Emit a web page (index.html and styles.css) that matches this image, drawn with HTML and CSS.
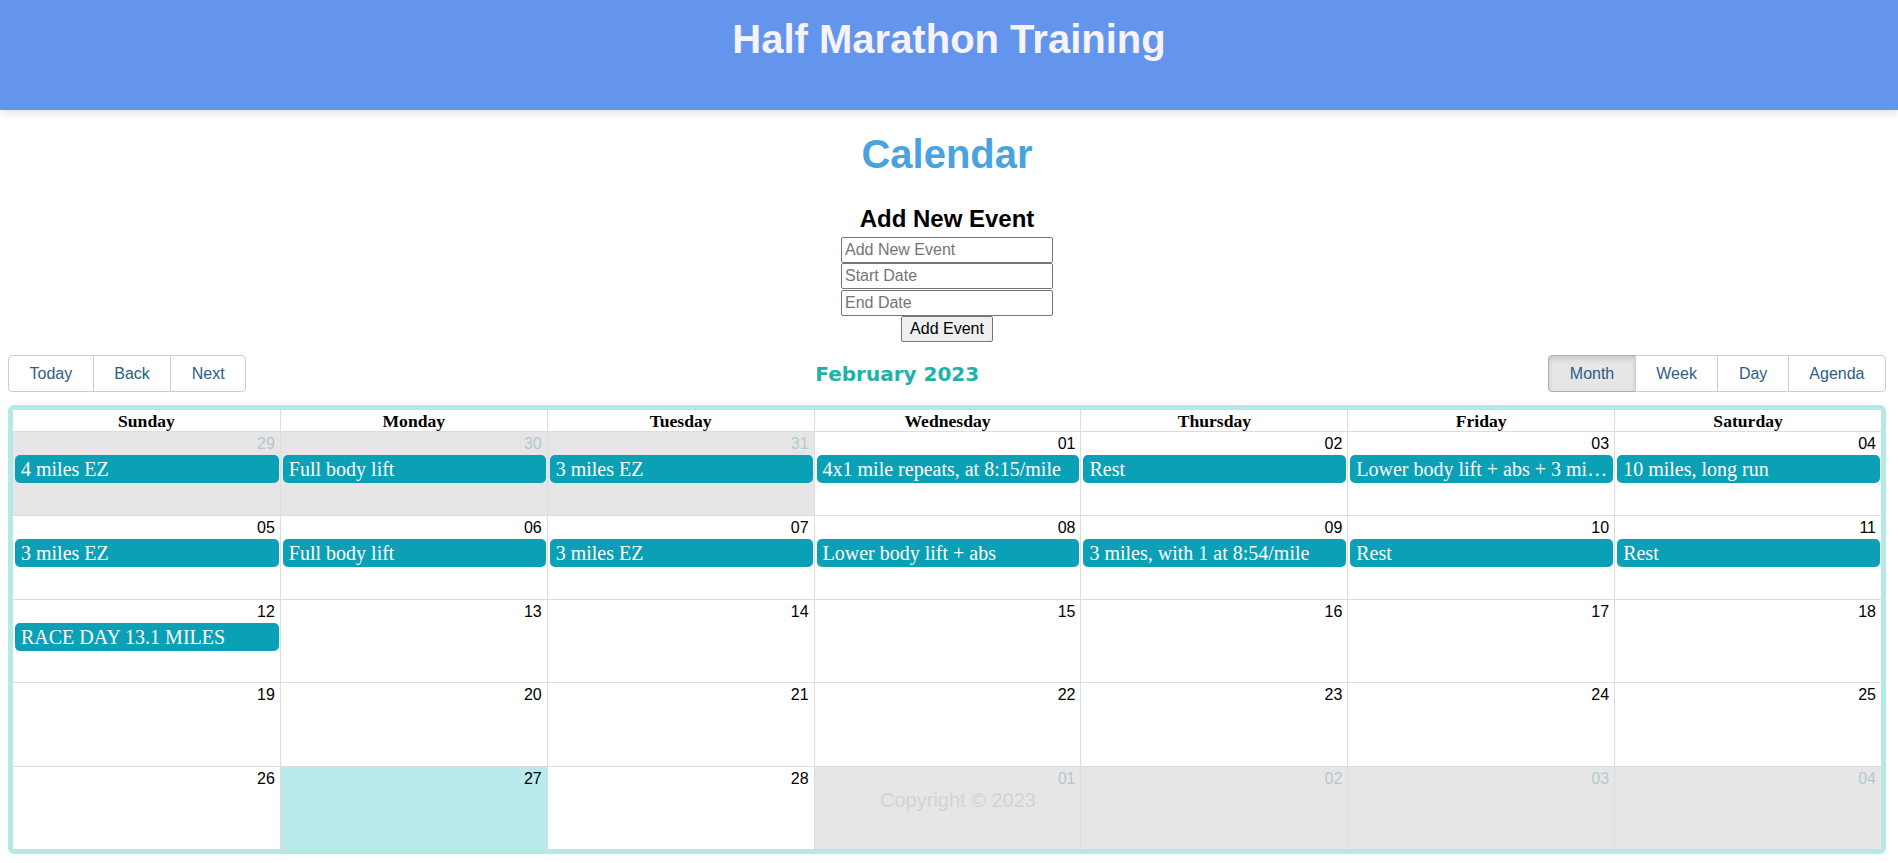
FILE: index.html
```html
<!DOCTYPE html>
<html lang="en">
<head>
<meta charset="utf-8">
<title>Half Marathon Training</title>
<link rel="stylesheet" href="styles.css">
</head>
<body>
<header class="site-header">
  <h1 class="site-title">Half Marathon Training</h1>
</header>
<main class="main">
  <h1 class="page-title">Calendar</h1>
  <section class="add-event">
    <h2 class="add-title">Add New Event</h2>
    <input class="field" type="text" placeholder="Add New Event">
    <input class="field" type="text" placeholder="Start Date">
    <input class="field" type="text" placeholder="End Date">
    <button class="add-btn" type="button">Add Event</button>
  </section>

  <div class="toolbar">
    <div class="btn-group">
      <button class="tb-btn" type="button">Today</button>
      <button class="tb-btn" type="button">Back</button>
      <button class="tb-btn" type="button">Next</button>
    </div>
    <div class="tb-label">February 2023</div>
    <div class="btn-group">
      <button class="tb-btn active" type="button">Month</button>
      <button class="tb-btn" type="button">Week</button>
      <button class="tb-btn" type="button">Day</button>
      <button class="tb-btn" type="button">Agenda</button>
    </div>
  </div>

  <div class="calendar">
    <div class="head-row">
      <div class="head-cell">Sunday</div>
      <div class="head-cell">Monday</div>
      <div class="head-cell">Tuesday</div>
      <div class="head-cell">Wednesday</div>
      <div class="head-cell">Thursday</div>
      <div class="head-cell">Friday</div>
      <div class="head-cell">Saturday</div>
    </div>
    <div class="weeks">
      <div class="week">
        <div class="day off"><div class="num">29</div><div class="event">4 miles EZ</div></div>
        <div class="day off"><div class="num">30</div><div class="event">Full body lift</div></div>
        <div class="day off"><div class="num">31</div><div class="event">3 miles EZ</div></div>
        <div class="day"><div class="num">01</div><div class="event">4x1 mile repeats, at 8:15/mile</div></div>
        <div class="day"><div class="num">02</div><div class="event">Rest</div></div>
        <div class="day"><div class="num">03</div><div class="event">Lower body lift + abs + 3 miles EZ</div></div>
        <div class="day"><div class="num">04</div><div class="event">10 miles, long run</div></div>
      </div>
      <div class="week">
        <div class="day"><div class="num">05</div><div class="event">3 miles EZ</div></div>
        <div class="day"><div class="num">06</div><div class="event">Full body lift</div></div>
        <div class="day"><div class="num">07</div><div class="event">3 miles EZ</div></div>
        <div class="day"><div class="num">08</div><div class="event">Lower body lift + abs</div></div>
        <div class="day"><div class="num">09</div><div class="event">3 miles, with 1 at 8:54/mile</div></div>
        <div class="day"><div class="num">10</div><div class="event">Rest</div></div>
        <div class="day"><div class="num">11</div><div class="event">Rest</div></div>
      </div>
      <div class="week">
        <div class="day"><div class="num">12</div><div class="event">RACE DAY 13.1 MILES</div></div>
        <div class="day"><div class="num">13</div></div>
        <div class="day"><div class="num">14</div></div>
        <div class="day"><div class="num">15</div></div>
        <div class="day"><div class="num">16</div></div>
        <div class="day"><div class="num">17</div></div>
        <div class="day"><div class="num">18</div></div>
      </div>
      <div class="week">
        <div class="day"><div class="num">19</div></div>
        <div class="day"><div class="num">20</div></div>
        <div class="day"><div class="num">21</div></div>
        <div class="day"><div class="num">22</div></div>
        <div class="day"><div class="num">23</div></div>
        <div class="day"><div class="num">24</div></div>
        <div class="day"><div class="num">25</div></div>
      </div>
      <div class="week">
        <div class="day"><div class="num">26</div></div>
        <div class="day today"><div class="num">27</div></div>
        <div class="day"><div class="num">28</div></div>
        <div class="day off"><div class="num">01</div></div>
        <div class="day off"><div class="num">02</div></div>
        <div class="day off"><div class="num">03</div></div>
        <div class="day off"><div class="num">04</div></div>
      </div>
    </div>
  </div>
</main>
<footer class="footer">Copyright © 2023</footer>
</body>
</html>
```

FILE: styles.css
```css
html, body {
  margin: 0;
  padding: 0;
}

body {
  font-family: "Liberation Sans", Arial, sans-serif;
  background: #ffffff;
  color: #000;
  position: relative;
}

.site-header {
  box-sizing: border-box;
  height: 110px;
  padding-top: 16px;
  background: #6495ed;
  box-shadow: 0 3px 8px rgba(0, 0, 0, 0.12);
  text-align: center;
}

.site-title {
  margin: 0;
  font-size: 40px;
  line-height: 46px;
  font-weight: bold;
  color: #f5f3f7;
}

.main {
  padding: 0 12px 0 8px;
}

.page-title {
  margin: 21px 0 28px;
  font-size: 40px;
  line-height: 46px;
  font-weight: bold;
  color: #4aa3df;
  text-align: center;
}

.add-event {
  display: flex;
  flex-direction: column;
  align-items: center;
  gap: 0.5px;
}

.add-title {
  margin: 0 0 3px;
  font-size: 24px;
  line-height: 28px;
  font-weight: bold;
}

.field {
  box-sizing: border-box;
  width: 212px;
  height: 26px;
  margin: 0;
  padding: 1px 3px;
  border: 1px solid #767676;
  border-radius: 2px;
  font-family: "Liberation Sans", Arial, sans-serif;
  font-size: 16px;
}

.field::placeholder {
  color: #757575;
}

.add-btn {
  box-sizing: border-box;
  height: 26px;
  margin: 0;
  padding: 1px 8px;
  border: 1px solid #767676;
  border-radius: 2px;
  background: #efefef;
  font-family: "Liberation Sans", Arial, sans-serif;
  font-size: 16px;
  color: #000;
}

.toolbar {
  display: flex;
  align-items: center;
  margin-top: 13px;
  height: 37px;
}

.btn-group {
  display: flex;
}

.tb-label {
  flex: 1;
  text-align: center;
  font-family: "DejaVu Sans", Verdana, sans-serif;
  font-weight: bold;
  font-size: 20px;
  color: #20b2aa;
}

.tb-btn {
  box-sizing: border-box;
  height: 37px;
  margin: 0 0 0 -1px;
  padding: 0 20.5px;
  border: 1px solid #ccc;
  border-radius: 0;
  background: #fff;
  font-family: "Liberation Sans", Arial, sans-serif;
  font-size: 16px;
  color: #2f5d84;
  white-space: nowrap;
}

.tb-btn:first-child {
  margin-left: 0;
  border-radius: 4px 0 0 4px;
}

.tb-btn:last-child {
  border-radius: 0 4px 4px 0;
}

.tb-btn.active {
  background: #e6e6e6;
  border-color: #adadad;
  box-shadow: inset 0 3px 5px rgba(0, 0, 0, 0.125);
}

.calendar {
  box-sizing: border-box;
  margin-top: 13px;
  height: 449px;
  border: 5px solid #b5e9e6;
  border-radius: 6px;
  background: #fff;
  display: flex;
  flex-direction: column;
  overflow: hidden;
}

.head-row {
  display: grid;
  grid-template-columns: repeat(7, 1fr);
  border-bottom: 1px solid #ddd;
}

.head-cell {
  height: 21px;
  text-align: center;
  font-family: "Liberation Serif", "Times New Roman", serif;
  font-weight: bold;
  font-size: 17.6px;
  line-height: 22px;
}

.head-cell + .head-cell {
  border-left: 1px solid #ddd;
}

.weeks {
  flex: 1;
  display: grid;
  grid-template-rows: repeat(5, 1fr);
}

.week {
  display: grid;
  grid-template-columns: repeat(7, 1fr);
  min-height: 0;
}

.week + .week {
  border-top: 1px solid #ddd;
}

.day {
  min-width: 0;
  padding: 3px 1px 1px 2px;
  overflow: hidden;
}

.day + .day {
  border-left: 1px solid #ddd;
}

.day.off {
  background: #e6e6e6;
}

.day.today {
  background: #bbeaed;
}

.num {
  text-align: right;
  padding-right: 4px;
  font-size: 16px;
  line-height: 18px;
  color: #000;
}

.day.off .num {
  color: #b3c9d1;
}

.event {
  margin-top: 2px;
  height: 28px;
  box-sizing: border-box;
  padding: 2px 5px 2px 6px;
  border-radius: 5px;
  background: #0aa0b5;
  color: #fff;
  font-family: "Liberation Serif", "Times New Roman", serif;
  font-size: 20px;
  line-height: 24px;
  white-space: nowrap;
  overflow: hidden;
  text-overflow: ellipsis;
}

.footer {
  position: absolute;
  top: 789px;
  left: 0;
  right: 0;
  padding-left: 18px;
  text-align: center;
  font-size: 20px;
  line-height: 23px;
  color: #d3d3d3;
  pointer-events: none;
}
```
